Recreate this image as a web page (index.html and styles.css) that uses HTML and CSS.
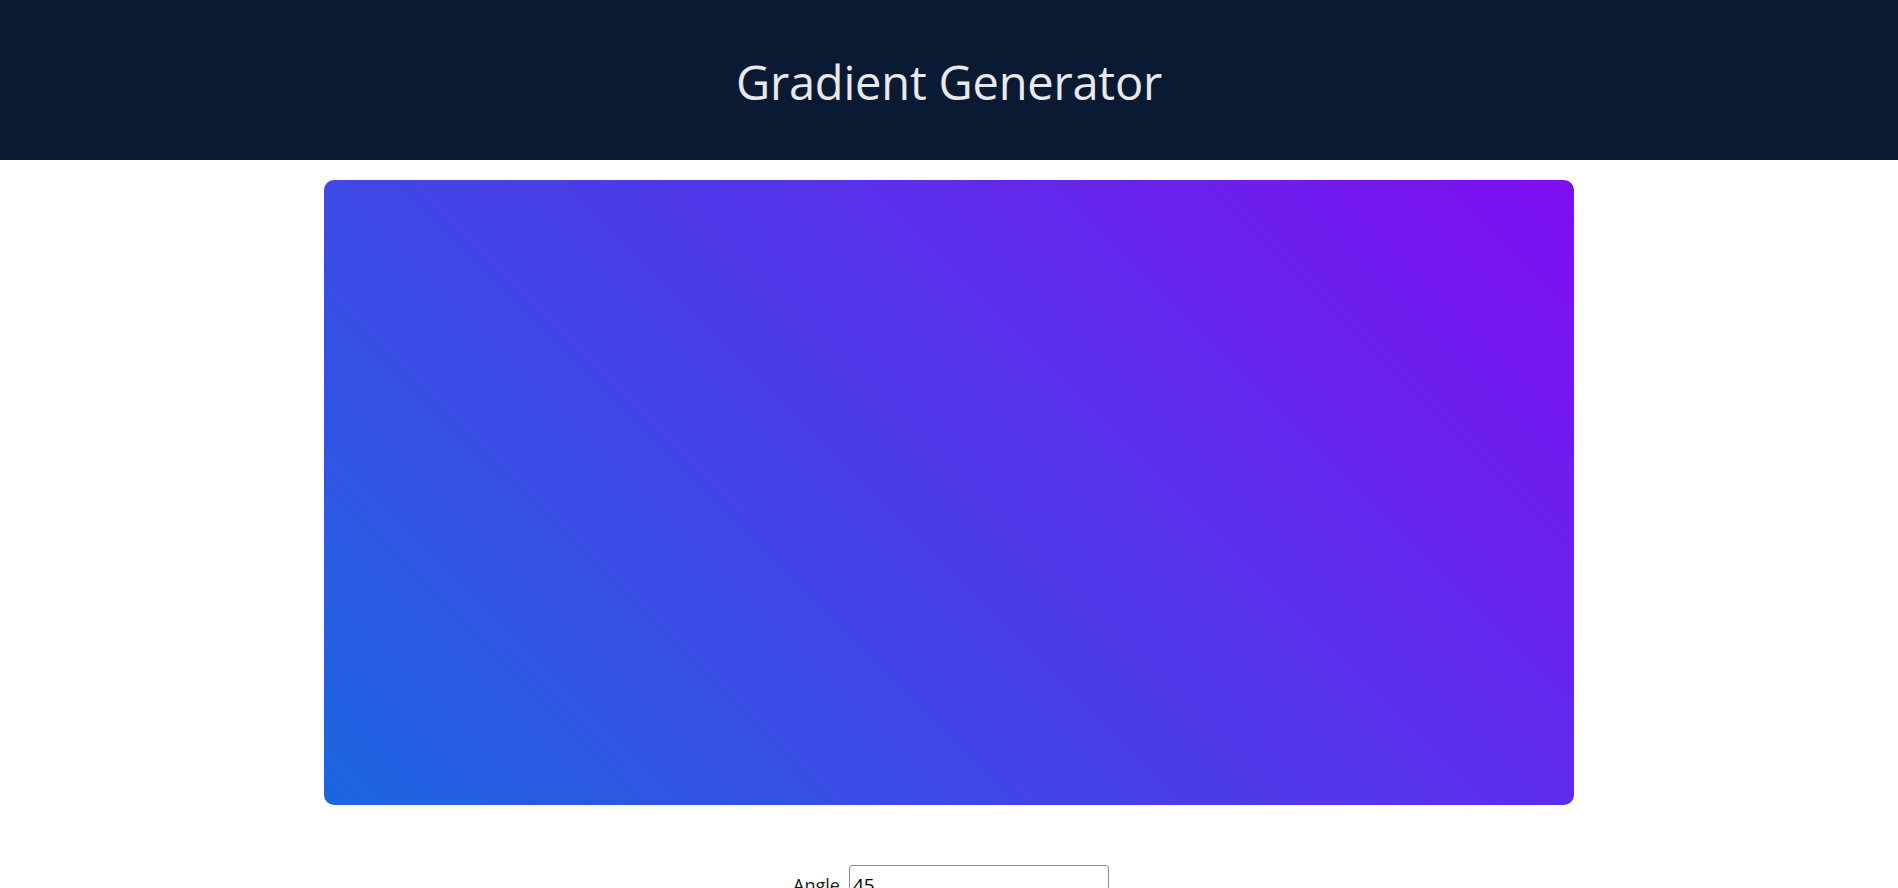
FILE: index.html
```html
<!DOCTYPE html>
<html lang="en">
<head>
<meta charset="utf-8">
<title>Gradient Generator</title>
<link rel="stylesheet" href="styles.css">
</head>
<body>
<header class="site-header">
  <h1 class="title">Gradient Generator</h1>
</header>
<main class="main">
  <div class="preview"></div>
  <div class="controls">
    <label class="field">Angle <input class="angle-input" type="number" value="45"></label>
  </div>
</main>
</body>
</html>
```
FILE: styles.css
```css
html, body {
  margin: 0;
  padding: 0;
  background: #ffffff;
  font-family: "Open Sans", "Noto Sans", sans-serif;
  color: #1a1a1a;
}
.site-header {
  height: 160px;
  background: #0a1a32;
  display: flex;
  align-items: center;
  justify-content: center;
}
.title {
  margin: 4px 0 0;
  font-weight: 400;
  font-size: 47px;
  color: #e9e9ec;
  line-height: 1;
  letter-spacing: -0.2px;
}
.main {
  display: flex;
  flex-direction: column;
  align-items: center;
  padding-top: 20px;
}
.preview {
  width: 1250px;
  height: 625px;
  border-radius: 10px;
  background: linear-gradient(45deg, #1c66e0, #7f0ef2);
}
.controls {
  margin-top: 60px;
  display: flex;
  justify-content: center;
}
.field {
  font-size: 18px;
  line-height: 1.2;
  display: flex;
  align-items: baseline;
  gap: 9px;
  padding-left: 4px;
}
.angle-input {
  width: 260px;
  height: 40px;
  box-sizing: border-box;
  border: 1px solid #8a8a8a;
  border-radius: 3px;
  font-size: 19px;
  font-family: "Open Sans", sans-serif;
  padding: 6px 3px;
  color: #000;
}
```
